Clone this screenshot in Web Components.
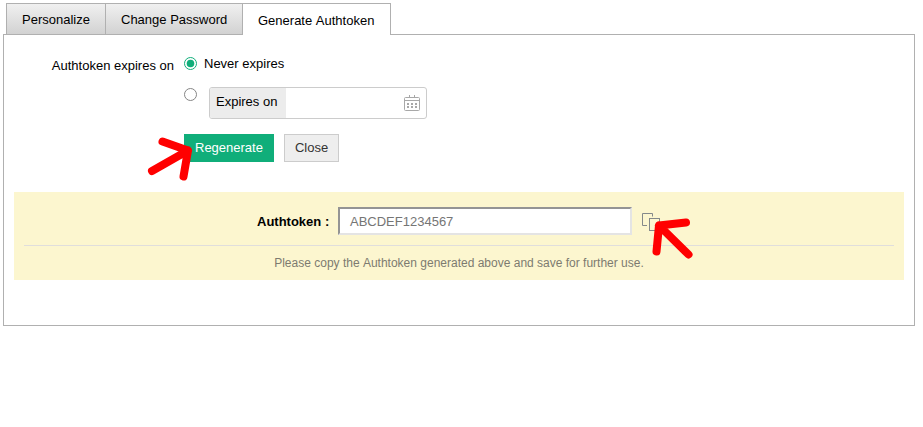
<!DOCTYPE html>
<html lang="en">
<head>
<meta charset="utf-8">
<title>Generate Authtoken</title>
<style>
html,body{margin:0;background:#fff;height:427px;overflow:hidden}
body{font:13px/16px "Liberation Sans",Arial,sans-serif;color:#000}
</style>
</head>
<body>
<auth-page></auth-page>
<script>
function define(name, html) {
  const template = document.createElement('template');
  template.innerHTML = html;
  customElements.define(name, class extends HTMLElement {
    constructor() {
      super();
      this.attachShadow({mode: 'open'}).append(template.content.cloneNode(true));
    }
  });
}

define('tab-item', `<style>
:host{display:block;box-sizing:border-box;height:31px;padding:8px 0 0 15px;border-left:1px solid #b0b0b0;border-top:1px solid #b0b0b0;background:linear-gradient(#f0f0f0,#d2d2d2);white-space:nowrap}
:host([active]){height:32px;padding-top:9px;background:#fff;border-right:1px solid #b0b0b0;font-kerning:none}
</style><slot></slot>`);

define('radio-dot', `<style>
:host{display:block;box-sizing:border-box;width:13px;height:13px;flex:none}
svg{display:block}
.dot{display:none}
:host([checked]) .ring{stroke:#10ae7a}
:host([checked]) .dot{display:block}
</style><svg width="13" height="13"><circle class="ring" cx="6.5" cy="6.5" r="6" fill="#fff" stroke="#858585"/><circle class="dot" cx="6.5" cy="6.5" r="3.8" fill="#10ae7a"/></svg>`);

define('push-button', `<style>
:host{display:block;box-sizing:border-box;height:28px;padding:5px 10px;border:1px solid #ccc;background:#eee;color:#333;white-space:nowrap}
:host([primary]){background:#10ae7a;border-color:#10ae7a;color:#fff}
</style><slot></slot>`);

define('date-field', `<style>
:host{display:flex;box-sizing:border-box;width:218px;height:32px;border:1px solid #ccc;border-radius:3px;background:#fff;justify-content:space-between;overflow:hidden}
.label{box-sizing:border-box;width:76px;padding:6px 0 0 6px;background:#ececec}
svg{margin:7px 6px 0 0}
</style><div class="label"><slot></slot></div>
<svg width="16" height="16" fill="none" stroke="#a8a8a8"><rect x=".5" y="2.5" width="15" height="13" rx="1"/><path d="M1 5.5H15M5.5 0V3M10.500 0V3"/><path stroke-width="2" stroke-dasharray="2 2" d="M3 9H13M3 12H13"/></svg>`);

define('copy-icon', `<style>:host{display:block}svg{display:block}</style>
<svg width="18" height="18" fill="none" stroke="#84898a"><path d="M10.500 3.500V.5H.5V12.500H5"/><rect x="7.500" y="5.500" width="10" height="12"/></svg>`);

define('token-notice', `<style>
:host{display:block;box-sizing:border-box;height:88px;padding:15px 10px 0;background:#fcf6cf}
.row{display:flex;height:38px;padding-left:233px;border-bottom:1px solid #e0dedc}
b{width:81px;padding-top:7px;white-space:nowrap}
.input{box-sizing:border-box;width:294px;height:28px;padding:5px 10px;background:#fff;border:2px solid;border-color:#949494 #e4e4e4 #e4e4e4 #949494;color:#757575}
copy-icon{margin:6px 0 0 10px}
.note{padding-top:9px;font-size:12px;text-align:center;color:#7d7b70;font-kerning:none}
</style><div class="row"><b>Authtoken :</b><div class="input"><slot></slot></div><copy-icon></copy-icon></div>
<div class="note">Please copy the Authtoken generated above and save for further use.</div>`);

define('pointer-arrow', `<style>:host{display:block;position:absolute;pointer-events:none}svg{display:block}
.copy{display:none}:host([copy]) .copy{display:block}:host([copy]) .button{display:none}</style>
<svg width="50" height="50" fill="none" stroke="#f00" stroke-width="8" stroke-linecap="round" stroke-linejoin="round">
<path class="button" d="M7 36L43 15.500M17.500 6.500L43 15.500L38.500 41.500"/>
<path class="copy" d="M43.500 39.500L14 10.500M41 7.500L14 10.500L11.500 36.500"/></svg>`);

define('auth-page', `<style>
:host{display:block;padding:3px 0 0 3px}
.tabs{display:flex;height:31px;padding-left:3px;position:relative;z-index:1}
tab-item:nth-child(1){width:99px}tab-item:nth-child(2){width:137px}tab-item:nth-child(3){width:149px}
.panel{box-sizing:border-box;width:912px;height:292px;border:1px solid #b0b0b0;padding:22px 10px 0}
.form{display:grid;grid-template-columns:160px 1fr;column-gap:10px;height:105px}
.label{text-align:right;padding-top:1px}
.never{display:flex;gap:7px;line-height:14px}
.date{display:flex;gap:12px;margin-top:16px}
.date radio-dot{margin-top:1px}
.actions{display:flex;gap:10px;margin-top:15px}
token-notice{margin-top:30px}
.a1{left:145px;top:135px}.a2{left:645px;top:215px}
</style>
<div class="tabs"><tab-item>Personalize</tab-item><tab-item>Change Password</tab-item><tab-item active>Generate Authtoken</tab-item></div>
<div class="panel">
<div class="form"><div class="label">Authtoken expires on</div><div>
<div class="never"><radio-dot checked></radio-dot><span>Never expires</span></div>
<div class="date"><radio-dot></radio-dot><date-field>Expires on</date-field></div>
<div class="actions"><push-button primary>Regenerate</push-button><push-button>Close</push-button></div>
</div></div>
<token-notice>ABCDEF1234567</token-notice>
</div>
<pointer-arrow class="a1"></pointer-arrow><pointer-arrow class="a2" copy></pointer-arrow>`);
</script>
</body>
</html>
